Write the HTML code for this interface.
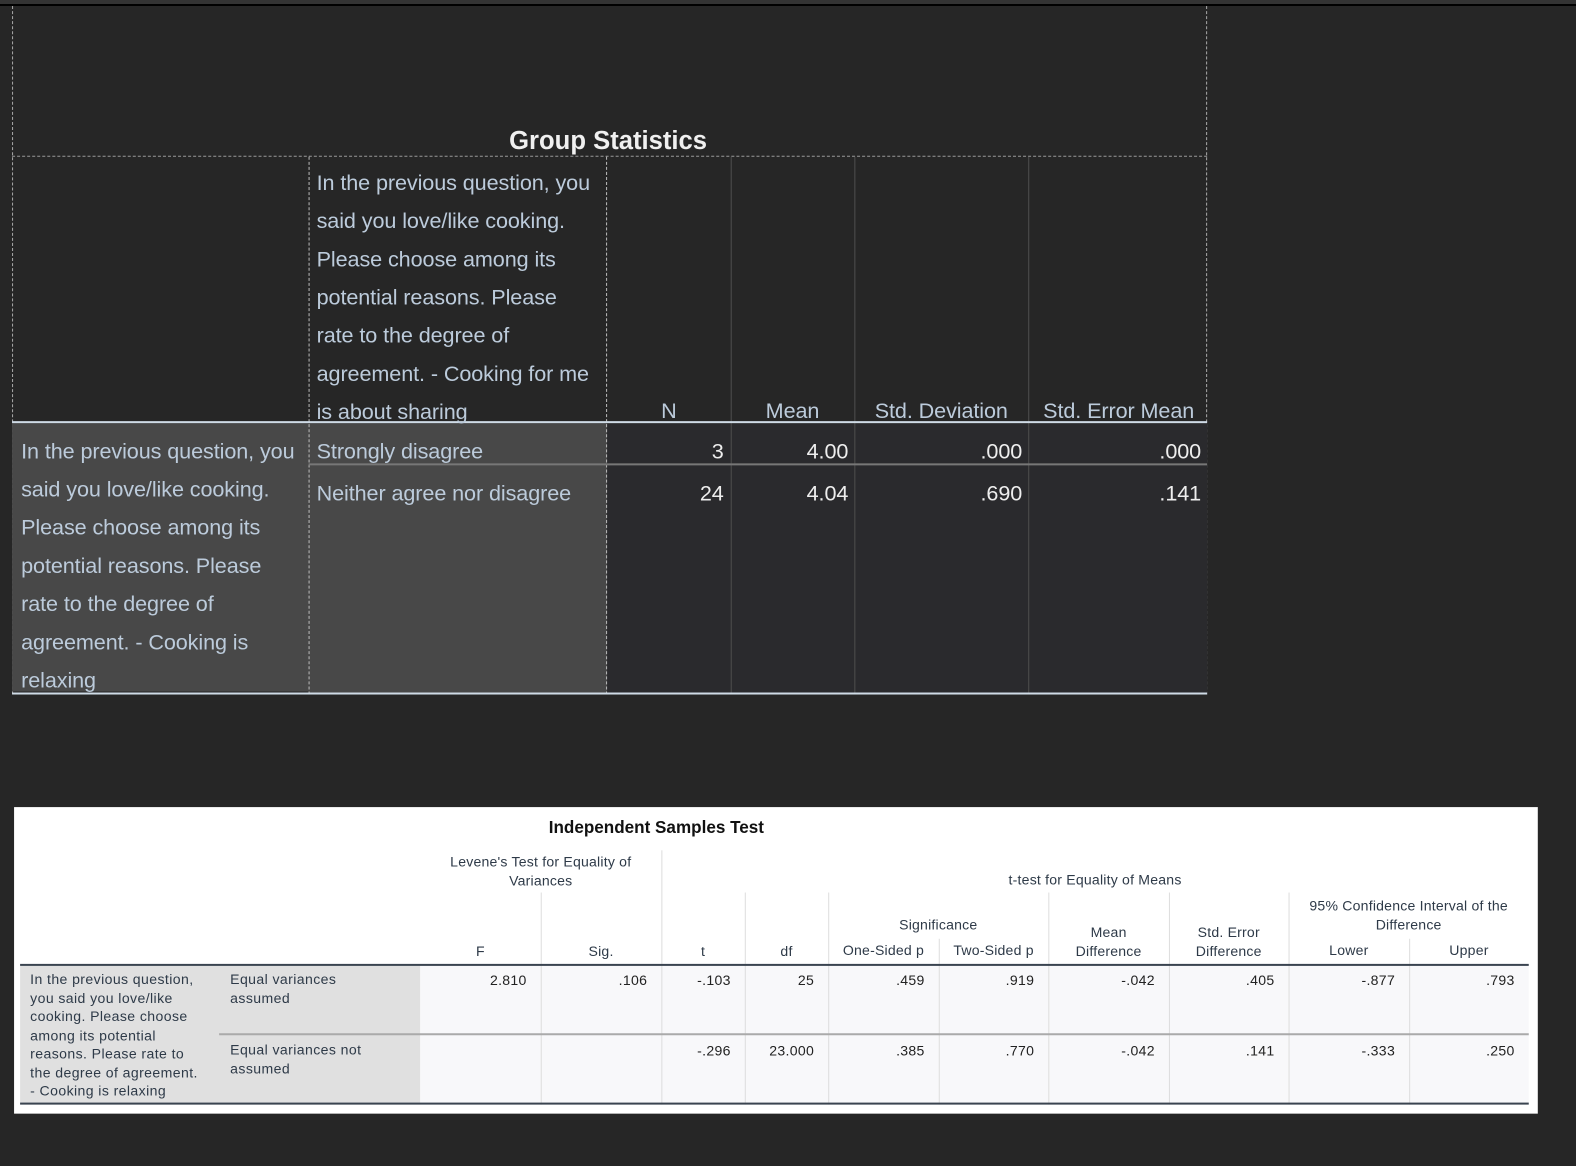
<!DOCTYPE html>
<html><head><meta charset="utf-8"><style>
*{margin:0;padding:0;box-sizing:border-box}
body{width:1576px;height:1166px;background:#262626;position:relative;overflow:hidden;font-family:"Liberation Sans",sans-serif}
#w{position:absolute;left:0;top:0;width:1568px;height:1160px;transform:scale(1.0051);transform-origin:0 0}
.a{position:absolute}
.t{position:absolute;color:#bccbdb;font-size:21.5px;line-height:38px;white-space:nowrap;letter-spacing:-0.1px}
.n{position:absolute;color:#eeeeee;font-size:21.5px;line-height:38px;text-align:right;letter-spacing:-0.1px}
.s{position:absolute;color:#2e3a48;font-size:14px;line-height:18.5px;white-space:nowrap;letter-spacing:0.4px}
.sr{position:absolute;color:#222;font-size:14px;line-height:18px;text-align:right;letter-spacing:0.3px}
.sc{position:absolute;color:#2e3a48;font-size:14px;line-height:18.5px;text-align:center;letter-spacing:0.2px}
</style></head><body>
<div class="a" style="left:0;top:0;width:1576px;height:4px;background:#333"></div>
<div class="a" style="left:0;top:4px;width:1576px;height:2px;background:#000"></div>
<div id="w">
<!-- upper table -->
<div class="a" style="left:12px;top:6px;width:1189px;height:685px;border-left:1px dashed #aaa;border-right:1px dashed #aaa"></div>
<div class="a" style="left:12px;top:155px;width:1189px;border-top:1px dashed #999"></div>
<div class="a" style="left:604px;top:421px;width:597px;height:269px;background:#2a2a2d"></div>
<div class="a" style="left:12px;top:421px;width:295px;height:267px;background:#484848"></div>
<div class="a" style="left:307px;top:421px;width:297px;height:269px;background:#484848"></div>
<div class="a" style="left:307px;top:156px;height:535px;border-left:1px dashed #bbb"></div>
<div class="a" style="left:603px;top:156px;height:535px;border-left:1px dashed #bbb"></div>
<div class="a" style="left:727px;top:156px;width:1px;height:535px;background:#4e4e4e"></div>
<div class="a" style="left:850px;top:156px;width:1px;height:535px;background:#4e4e4e"></div>
<div class="a" style="left:1023px;top:156px;width:1px;height:535px;background:#4e4e4e"></div>
<div class="a" style="left:12px;top:419px;width:1189px;height:2px;background:#cfdbe6"></div>
<div class="a" style="left:307px;top:461px;width:894px;height:2px;background:#777"></div>
<div class="a" style="left:12px;top:689px;width:1189px;height:2px;background:#cfdbe6"></div>
<div class="a" style="left:0;top:122px;width:1210px;text-align:center;color:#f0f0f0;font-weight:bold;font-size:25.5px;line-height:36px">Group Statistics</div>
<div class="t" style="left:315px;top:163px">In the previous question, you<br>said you love/like cooking.<br>Please choose among its<br>potential reasons. Please<br>rate to the degree of<br>agreement. - Cooking for me<br>is about sharing</div>
<div class="t" style="left:604px;top:390px;width:123px;text-align:center">N</div>
<div class="t" style="left:727px;top:390px;width:123px;text-align:center">Mean</div>
<div class="t" style="left:850px;top:390px;width:173px;text-align:center">Std. Deviation</div>
<div class="t" style="left:1023px;top:390px;width:180px;text-align:center">Std. Error Mean</div>
<div class="t" style="left:21px;top:430px">In the previous question, you<br>said you love/like cooking.<br>Please choose among its<br>potential reasons. Please<br>rate to the degree of<br>agreement. - Cooking is<br>relaxing</div>
<div class="t" style="left:315px;top:430px">Strongly disagree</div>
<div class="t" style="left:315px;top:472px">Neither agree nor disagree</div>
<div class="n" style="left:604px;top:430px;width:116px">3</div>
<div class="n" style="left:727px;top:430px;width:117px">4.00</div>
<div class="n" style="left:850px;top:430px;width:167px">.000</div>
<div class="n" style="left:1023px;top:430px;width:172px">.000</div>
<div class="n" style="left:604px;top:472px;width:116px">24</div>
<div class="n" style="left:727px;top:472px;width:117px">4.04</div>
<div class="n" style="left:850px;top:472px;width:167px">.690</div>
<div class="n" style="left:1023px;top:472px;width:172px">.141</div>

<!-- lower table -->
<div class="a" style="left:14px;top:803px;width:1516px;height:305px;background:#fff"></div>
<div class="a" style="left:418px;top:961px;width:1103px;height:138px;background:#f8f8fa"></div>
<div class="a" style="left:20px;top:961px;width:398px;height:138px;background:#e0e0e0"></div>
<div class="a" style="left:658px;top:846px;width:1px;height:253px;background:#ddd"></div>
<div class="a" style="left:538px;top:888px;width:1px;height:211px;background:#ddd"></div>
<div class="a" style="left:741px;top:888px;width:1px;height:211px;background:#ddd"></div>
<div class="a" style="left:824px;top:888px;width:1px;height:211px;background:#ddd"></div>
<div class="a" style="left:934px;top:934px;width:1px;height:165px;background:#ddd"></div>
<div class="a" style="left:1043px;top:888px;width:1px;height:211px;background:#ddd"></div>
<div class="a" style="left:1163px;top:888px;width:1px;height:211px;background:#ddd"></div>
<div class="a" style="left:1282px;top:888px;width:1px;height:211px;background:#ddd"></div>
<div class="a" style="left:1402px;top:934px;width:1px;height:165px;background:#ddd"></div>
<div class="a" style="left:20px;top:959px;width:1501px;height:2px;background:#3a4450"></div>
<div class="a" style="left:218px;top:1028px;width:1303px;height:2px;background:#aaa"></div>
<div class="a" style="left:20px;top:1097px;width:1501px;height:2px;background:#3a4450"></div>

<div class="a" style="left:418px;top:812px;width:470px;text-align:center;font-weight:bold;font-size:17px;color:#111;line-height:24px">Independent Samples Test</div>
<div class="sc" style="left:418px;top:848px;width:240px">Levene's Test for Equality of<br>Variances</div>
<div class="sc" style="left:658px;top:866px;width:863px">t-test for Equality of Means</div>
<div class="sc" style="left:824px;top:911px;width:219px">Significance</div>
<div class="sc" style="left:1043px;top:918px;width:120px">Mean<br>Difference</div>
<div class="sc" style="left:1163px;top:918px;width:119px">Std. Error<br>Difference</div>
<div class="sc" style="left:1282px;top:892px;width:239px">95% Confidence Interval of the<br>Difference</div>
<div class="sc" style="left:418px;top:937px;width:120px">F</div>
<div class="sc" style="left:538px;top:937px;width:120px">Sig.</div>
<div class="sc" style="left:658px;top:937px;width:83px">t</div>
<div class="sc" style="left:741px;top:937px;width:83px">df</div>
<div class="sc" style="left:824px;top:936px;width:110px">One-Sided p</div>
<div class="sc" style="left:934px;top:936px;width:109px">Two-Sided p</div>
<div class="sc" style="left:1282px;top:936px;width:120px">Lower</div>
<div class="sc" style="left:1402px;top:936px;width:119px">Upper</div>

<div class="s" style="left:30px;top:965px">In the previous question,<br>you said you love/like<br>cooking. Please choose<br>among its potential<br>reasons. Please rate to<br>the degree of agreement.<br>- Cooking is relaxing</div>
<div class="s" style="left:229px;top:965px">Equal variances<br>assumed</div>
<div class="s" style="left:229px;top:1035px">Equal variances not<br>assumed</div>

<div class="sr" style="left:418px;top:966px;width:106px">2.810</div>
<div class="sr" style="left:538px;top:966px;width:106px">.106</div>
<div class="sr" style="left:658px;top:966px;width:69px">-.103</div>
<div class="sr" style="left:741px;top:966px;width:69px">25</div>
<div class="sr" style="left:824px;top:966px;width:96px">.459</div>
<div class="sr" style="left:934px;top:966px;width:95px">.919</div>
<div class="sr" style="left:1043px;top:966px;width:106px">-.042</div>
<div class="sr" style="left:1163px;top:966px;width:105px">.405</div>
<div class="sr" style="left:1282px;top:966px;width:106px">-.877</div>
<div class="sr" style="left:1402px;top:966px;width:105px">.793</div>

<div class="sr" style="left:658px;top:1036px;width:69px">-.296</div>
<div class="sr" style="left:741px;top:1036px;width:69px">23.000</div>
<div class="sr" style="left:824px;top:1036px;width:96px">.385</div>
<div class="sr" style="left:934px;top:1036px;width:95px">.770</div>
<div class="sr" style="left:1043px;top:1036px;width:106px">-.042</div>
<div class="sr" style="left:1163px;top:1036px;width:105px">.141</div>
<div class="sr" style="left:1282px;top:1036px;width:106px">-.333</div>
<div class="sr" style="left:1402px;top:1036px;width:105px">.250</div>
</div>
</body></html>
